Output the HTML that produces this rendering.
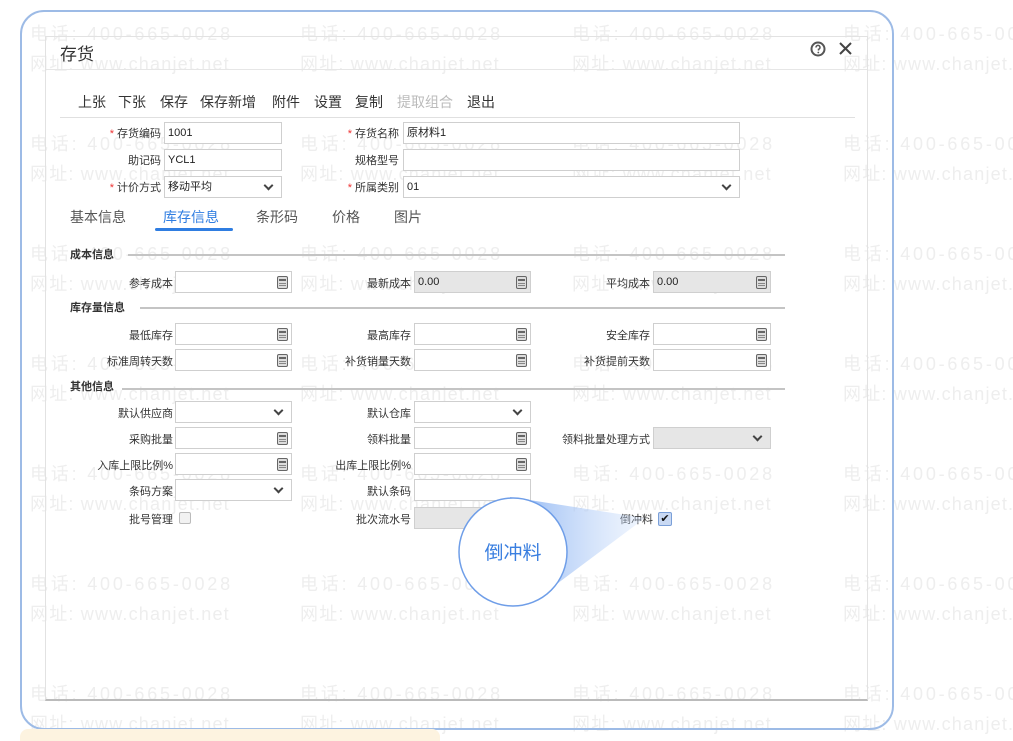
<!DOCTYPE html>
<html><head><meta charset="utf-8">
<style>
*{margin:0;padding:0;box-sizing:border-box}
body{width:1013px;height:741px;background:#fff;position:relative;overflow:hidden;font-family:"Liberation Sans","Noto Sans CJK SC",sans-serif;color:#333}
.a{position:absolute}
#wmw{position:absolute;left:0;top:0;width:1013px;height:741px;overflow:hidden}
.wm{position:absolute;font-size:18px;color:#eeeeee;letter-spacing:2.8px;white-space:nowrap}
.wu{letter-spacing:1.2px}
.lb{position:absolute;font-size:11px;color:#333;text-align:right;width:120px;white-space:nowrap}
.lb i{color:#e33;font-style:normal;margin-right:3px}
.in{position:absolute;height:22px;border:1px solid #cfcfcf;background:#fff;font-size:11px;line-height:20px;padding-left:3px;color:#222}
.g{background:#e6e6e6}
.calc{position:absolute;right:3px;top:4px;width:11px;height:13px;border:1.5px solid #666;border-radius:2px;background:#ddd}
.calc:before{content:"";position:absolute;left:1px;right:1px;top:2px;height:2px;background:#666}
.calc:after{content:"";position:absolute;left:1px;right:1px;top:6px;height:1px;background:#888;box-shadow:0 2px 0 #888}
.sel:after{content:"";position:absolute;right:9px;top:5px;width:5px;height:5px;border-right:2px solid #444;border-bottom:2px solid #444;transform:rotate(45deg)}
.sec{position:absolute;font-size:11px;color:#333;font-weight:bold}
.ln{position:absolute;height:2px;background:#c4c4c4}
.tb{position:absolute;top:92px;font-size:14px;color:#333}
.tab{position:absolute;top:207px;font-size:14px;color:#555}
</style></head><body>
<div id="wmw">
<div class="wm" style="left:30px;top:20px">电话: 400-665-0028</div><div class="wm wu" style="left:30px;top:50px">网址: www.chanjet.net</div>
<div class="wm" style="left:300px;top:20px">电话: 400-665-0028</div><div class="wm wu" style="left:300px;top:50px">网址: www.chanjet.net</div>
<div class="wm" style="left:572px;top:20px">电话: 400-665-0028</div><div class="wm wu" style="left:572px;top:50px">网址: www.chanjet.net</div>
<div class="wm" style="left:843px;top:20px">电话: 400-665-0028</div><div class="wm wu" style="left:843px;top:50px">网址: www.chanjet.net</div>
<div class="wm" style="left:30px;top:130px">电话: 400-665-0028</div><div class="wm wu" style="left:30px;top:160px">网址: www.chanjet.net</div>
<div class="wm" style="left:300px;top:130px">电话: 400-665-0028</div><div class="wm wu" style="left:300px;top:160px">网址: www.chanjet.net</div>
<div class="wm" style="left:572px;top:130px">电话: 400-665-0028</div><div class="wm wu" style="left:572px;top:160px">网址: www.chanjet.net</div>
<div class="wm" style="left:843px;top:130px">电话: 400-665-0028</div><div class="wm wu" style="left:843px;top:160px">网址: www.chanjet.net</div>
<div class="wm" style="left:30px;top:240px">电话: 400-665-0028</div><div class="wm wu" style="left:30px;top:270px">网址: www.chanjet.net</div>
<div class="wm" style="left:300px;top:240px">电话: 400-665-0028</div><div class="wm wu" style="left:300px;top:270px">网址: www.chanjet.net</div>
<div class="wm" style="left:572px;top:240px">电话: 400-665-0028</div><div class="wm wu" style="left:572px;top:270px">网址: www.chanjet.net</div>
<div class="wm" style="left:843px;top:240px">电话: 400-665-0028</div><div class="wm wu" style="left:843px;top:270px">网址: www.chanjet.net</div>
<div class="wm" style="left:30px;top:350px">电话: 400-665-0028</div><div class="wm wu" style="left:30px;top:380px">网址: www.chanjet.net</div>
<div class="wm" style="left:300px;top:350px">电话: 400-665-0028</div><div class="wm wu" style="left:300px;top:380px">网址: www.chanjet.net</div>
<div class="wm" style="left:572px;top:350px">电话: 400-665-0028</div><div class="wm wu" style="left:572px;top:380px">网址: www.chanjet.net</div>
<div class="wm" style="left:843px;top:350px">电话: 400-665-0028</div><div class="wm wu" style="left:843px;top:380px">网址: www.chanjet.net</div>
<div class="wm" style="left:30px;top:460px">电话: 400-665-0028</div><div class="wm wu" style="left:30px;top:490px">网址: www.chanjet.net</div>
<div class="wm" style="left:300px;top:460px">电话: 400-665-0028</div><div class="wm wu" style="left:300px;top:490px">网址: www.chanjet.net</div>
<div class="wm" style="left:572px;top:460px">电话: 400-665-0028</div><div class="wm wu" style="left:572px;top:490px">网址: www.chanjet.net</div>
<div class="wm" style="left:843px;top:460px">电话: 400-665-0028</div><div class="wm wu" style="left:843px;top:490px">网址: www.chanjet.net</div>
<div class="wm" style="left:30px;top:570px">电话: 400-665-0028</div><div class="wm wu" style="left:30px;top:600px">网址: www.chanjet.net</div>
<div class="wm" style="left:300px;top:570px">电话: 400-665-0028</div><div class="wm wu" style="left:300px;top:600px">网址: www.chanjet.net</div>
<div class="wm" style="left:572px;top:570px">电话: 400-665-0028</div><div class="wm wu" style="left:572px;top:600px">网址: www.chanjet.net</div>
<div class="wm" style="left:843px;top:570px">电话: 400-665-0028</div><div class="wm wu" style="left:843px;top:600px">网址: www.chanjet.net</div>
<div class="wm" style="left:30px;top:680px">电话: 400-665-0028</div><div class="wm wu" style="left:30px;top:710px">网址: www.chanjet.net</div>
<div class="wm" style="left:300px;top:680px">电话: 400-665-0028</div><div class="wm wu" style="left:300px;top:710px">网址: www.chanjet.net</div>
<div class="wm" style="left:572px;top:680px">电话: 400-665-0028</div><div class="wm wu" style="left:572px;top:710px">网址: www.chanjet.net</div>
<div class="wm" style="left:843px;top:680px">电话: 400-665-0028</div><div class="wm wu" style="left:843px;top:710px">网址: www.chanjet.net</div>
</div>

<div class="a" style="left:20px;top:10px;width:874px;height:720px;border:2px solid #9dbbe6;border-radius:24px"></div>
<div class="a" style="left:20px;top:729px;width:420px;height:12px;background:#fdf3e0;border-radius:8px 8px 0 0"></div>
<div class="a" style="left:45px;top:36px;width:823px;height:665px;border:1px solid #e2e2e2;border-bottom:2px solid #bbb"></div>
<div class="a" style="left:46px;top:69px;width:821px;height:1px;background:#e6e6e6"></div>
<div class="a" style="left:60px;top:40px;font-size:17px;color:#333">存货</div>
<svg class="a" style="left:810px;top:41px" width="16" height="16" viewBox="0 0 16 16"><circle cx="8" cy="8" r="6.5" fill="none" stroke="#555" stroke-width="2"/><path d="M6 6.5a2 2 0 1 1 2.5 1.8V9.5" fill="none" stroke="#555" stroke-width="1.5"/><circle cx="8.3" cy="11.5" r="0.9" fill="#555"/></svg>
<svg class="a" style="left:838px;top:41px" width="15" height="15" viewBox="0 0 15 15"><path d="M2 2L13 13M13 2L2 13" stroke="#444" stroke-width="2"/></svg>

<div class="tb" style="left:78px">上张</div><div class="tb" style="left:118px">下张</div><div class="tb" style="left:160px">保存</div><div class="tb" style="left:200px">保存新增</div><div class="tb" style="left:272px">附件</div><div class="tb" style="left:314px">设置</div><div class="tb" style="left:355px">复制</div><div class="tb" style="left:397px;color:#bbb">提取组合</div><div class="tb" style="left:467px">退出</div>
<div class="a" style="left:60px;top:117px;width:795px;height:1px;background:#e0e0e0"></div>

<div class="lb" style="left:41px;top:125px"><i>*</i>存货编码</div><div class="in" style="left:164px;top:122px;width:118px">1001</div>
<div class="lb" style="left:279px;top:125px"><i>*</i>存货名称</div><div class="in" style="left:403px;top:122px;width:337px">原材料1</div>
<div class="lb" style="left:41px;top:152px">助记码</div><div class="in" style="left:164px;top:149px;width:118px">YCL1</div>
<div class="lb" style="left:279px;top:152px">规格型号</div><div class="in" style="left:403px;top:149px;width:337px"></div>
<div class="lb" style="left:41px;top:179px"><i>*</i>计价方式</div><div class="in sel" style="left:164px;top:176px;width:118px">移动平均</div>
<div class="lb" style="left:279px;top:179px"><i>*</i>所属类别</div><div class="in sel" style="left:403px;top:176px;width:337px">01</div>

<div class="tab" style="left:70px">基本信息</div><div class="tab" style="left:163px;color:#2f7de1">库存信息</div><div class="tab" style="left:256px">条形码</div><div class="tab" style="left:332px">价格</div><div class="tab" style="left:394px">图片</div>
<div class="a" style="left:155px;top:228px;width:78px;height:3px;background:#2f7de1;border-radius:2px"></div>

<div class="sec" style="left:70px;top:246px">成本信息</div><div class="ln" style="left:128px;top:254px;width:657px"></div>
<div class="sec" style="left:70px;top:299px">库存量信息</div><div class="ln" style="left:140px;top:307px;width:645px"></div>
<div class="sec" style="left:70px;top:378px">其他信息</div><div class="ln" style="left:122px;top:388px;width:663px"></div>

<div class="lb" style="left:53px;top:275px">参考成本</div><div class="in" style="left:175px;top:271px;width:117px"><span class="calc"></span></div>
<div class="lb" style="left:291px;top:275px">最新成本</div><div class="in g" style="left:414px;top:271px;width:117px">0.00<span class="calc"></span></div>
<div class="lb" style="left:530px;top:275px">平均成本</div><div class="in g" style="left:653px;top:271px;width:118px">0.00<span class="calc"></span></div>
<div class="lb" style="left:53px;top:327px">最低库存</div><div class="in" style="left:175px;top:323px;width:117px"><span class="calc"></span></div>
<div class="lb" style="left:291px;top:327px">最高库存</div><div class="in" style="left:414px;top:323px;width:117px"><span class="calc"></span></div>
<div class="lb" style="left:530px;top:327px">安全库存</div><div class="in" style="left:653px;top:323px;width:118px"><span class="calc"></span></div>
<div class="lb" style="left:53px;top:353px">标准周转天数</div><div class="in" style="left:175px;top:349px;width:117px"><span class="calc"></span></div>
<div class="lb" style="left:291px;top:353px">补货销量天数</div><div class="in" style="left:414px;top:349px;width:117px"><span class="calc"></span></div>
<div class="lb" style="left:530px;top:353px">补货提前天数</div><div class="in" style="left:653px;top:349px;width:118px"><span class="calc"></span></div>
<div class="lb" style="left:53px;top:405px">默认供应商</div><div class="in sel" style="left:175px;top:401px;width:117px"></div>
<div class="lb" style="left:291px;top:405px">默认仓库</div><div class="in sel" style="left:414px;top:401px;width:117px"></div>
<div class="lb" style="left:53px;top:431px">采购批量</div><div class="in" style="left:175px;top:427px;width:117px"><span class="calc"></span></div>
<div class="lb" style="left:291px;top:431px">领料批量</div><div class="in" style="left:414px;top:427px;width:117px"><span class="calc"></span></div>
<div class="lb" style="left:530px;top:431px">领料批量处理方式</div><div class="in g sel" style="left:653px;top:427px;width:118px"></div>
<div class="lb" style="left:53px;top:457px">入库上限比例%</div><div class="in" style="left:175px;top:453px;width:117px"><span class="calc"></span></div>
<div class="lb" style="left:291px;top:457px">出库上限比例%</div><div class="in" style="left:414px;top:453px;width:117px"><span class="calc"></span></div>
<div class="lb" style="left:53px;top:483px">条码方案</div><div class="in sel" style="left:175px;top:479px;width:117px"></div>
<div class="lb" style="left:291px;top:483px">默认条码</div><div class="in" style="left:414px;top:479px;width:117px"></div>
<div class="lb" style="left:53px;top:511px">批号管理</div><div class="a" style="left:179px;top:512px;width:12px;height:12px;border:1px solid #bbb;border-radius:2px;background:#f2f2f2"></div>
<div class="lb" style="left:291px;top:511px">批次流水号</div><div class="in g" style="left:414px;top:507px;width:117px"></div>
<div class="lb" style="left:533px;top:511px">倒冲料</div>
<div class="a" style="left:658px;top:512px;width:14px;height:14px;border:1px solid #7a9fd8;border-radius:2px;background:#c9d9f3;font-size:11px;line-height:12px;text-align:center;color:#111">✔</div>

<svg class="a" style="left:440px;top:480px" width="230" height="140" viewBox="0 0 230 140">
<defs><linearGradient id="gr" x1="0" y1="0" x2="1" y2="0"><stop offset="0" stop-color="#7aa8f0" stop-opacity="0.85"/><stop offset="1" stop-color="#cfe0fb" stop-opacity="0.3"/></linearGradient></defs>
<polygon points="70,17 205,38 90,124" fill="url(#gr)"/>
<circle cx="73" cy="72" r="54" fill="#fff" stroke="#6f9ee8" stroke-width="1.5"/>
<text x="73" y="79" font-size="19" fill="#3a7fe0" text-anchor="middle" font-family="Liberation Sans, Noto Sans CJK SC, sans-serif">倒冲料</text>
</svg>
</body></html>
